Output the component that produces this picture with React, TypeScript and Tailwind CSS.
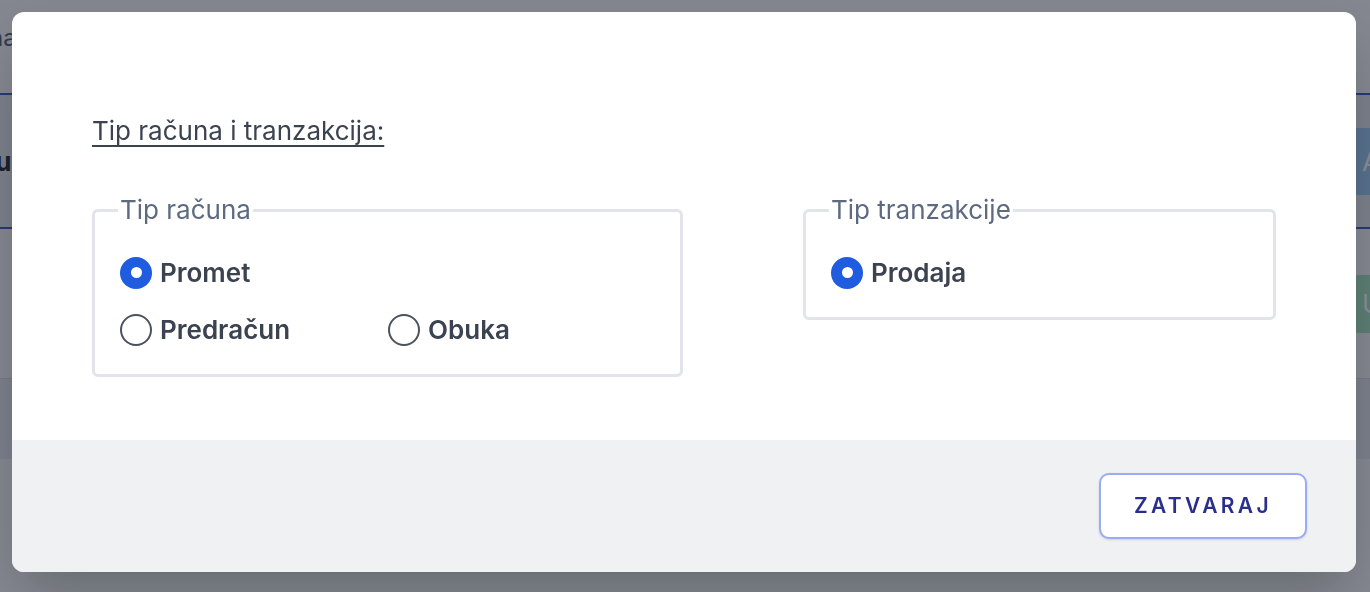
import React, { useState } from 'react';

type Option = { id: string; label: string };

const Radio: React.FC<{ checked: boolean; label: string; onSelect: () => void; className?: string }> = ({
  checked,
  label,
  onSelect,
  className = '',
}) => (
  <button type="button" onClick={onSelect} className={`flex items-center gap-2 text-left ${className}`}>
    {checked ? (
      <span className="flex h-8 w-8 shrink-0 items-center justify-center rounded-full bg-[#1f5ce0]">
        <span className="h-[11px] w-[11px] rounded-full bg-white" />
      </span>
    ) : (
      <span className="h-8 w-8 shrink-0 rounded-full border-2 border-[#4b5260] bg-white" />
    )}
    <span className="text-[26px] leading-[39px] font-semibold text-[#3b4350]">{label}</span>
  </button>
);

const tipoviRacuna: Option[] = [
  { id: 'promet', label: 'Promet' },
  { id: 'predracun', label: 'Predračun' },
  { id: 'obuka', label: 'Obuka' },
];

export default function App() {
  const [tipRacuna, setTipRacuna] = useState('promet');
  const [tipTranzakcije, setTipTranzakcije] = useState('prodaja');

  return (
    <div className="relative h-screen w-full overflow-hidden bg-white font-['Inter',sans-serif]">
      {/* page behind the dialog */}
      <div className="flex flex-col">
        <div className="flex h-[95px] items-start border-b-2 border-[#3b5bb8] bg-[#f6f7f9] pt-5">
          <span className="-ml-[80px] text-[24px] text-[#555c6b]">Blagajna</span>
        </div>
        <div className="flex h-[134px] items-center justify-between border-b-2 border-[#3b5bb8] bg-[#e4e7ee]">
          <span className="-ml-[52px] text-[26px] font-bold text-[#222733]">Raku</span>
          <span className="mr-[-40px] flex h-[67px] w-[60px] items-center pl-3 text-[26px] text-white bg-[#9cc8f0]">A</span>
        </div>
        <div className="flex h-[150px] items-center justify-end border-b border-[#d5d8df] bg-[#f6f7f9]">
          <span className="mr-[-40px] flex h-[58px] w-[60px] items-center pl-3 text-[26px] text-white bg-[#a6e3bf]">U</span>
        </div>
        <div className="h-[80px] bg-[#e4e7ee]" />
        <div className="h-[200px] bg-[#f6f7f9]" />
      </div>

      {/* overlay */}
      <div className="fixed inset-0 bg-[#111827]/50" />

      {/* dialog */}
      <div className="fixed left-3 top-3 flex h-[560px] w-[1344px] flex-col overflow-hidden rounded-xl bg-white shadow-2xl">
        <div className="flex-1 px-20 pt-[101px]">
          <h2 className="text-[26px] leading-[36px] text-[#3b4350] underline decoration-[1.5px] underline-offset-[5px]">
            Tip računa i tranzakcija:
          </h2>

          <div className="mt-[46px] flex justify-between">
            <fieldset className="h-[182px] w-[591px] rounded-md border-[3px] border-[#e3e4e9] px-[23px]">
              <legend className="px-[2px] text-[26px] leading-[30px] font-normal text-[#5d6a80]">Tip računa</legend>
              <div className="mt-[28px] flex flex-col gap-[18px] pl-[2px]">
                <Radio
                  checked={tipRacuna === tipoviRacuna[0].id}
                  label={tipoviRacuna[0].label}
                  onSelect={() => setTipRacuna(tipoviRacuna[0].id)}
                />
                <div className="flex">
                  <Radio
                    className="w-[268px]"
                    checked={tipRacuna === tipoviRacuna[1].id}
                    label={tipoviRacuna[1].label}
                    onSelect={() => setTipRacuna(tipoviRacuna[1].id)}
                  />
                  <Radio
                    checked={tipRacuna === tipoviRacuna[2].id}
                    label={tipoviRacuna[2].label}
                    onSelect={() => setTipRacuna(tipoviRacuna[2].id)}
                  />
                </div>
              </div>
            </fieldset>

            <fieldset className="h-[125px] w-[473px] rounded-md border-[3px] border-[#e3e4e9] px-[23px]">
              <legend className="px-[2px] text-[26px] leading-[30px] font-normal text-[#5d6a80]">Tip tranzakcije</legend>
              <div className="mt-[28px] pl-[2px]">
                <Radio
                  checked={tipTranzakcije === 'prodaja'}
                  label="Prodaja"
                  onSelect={() => setTipTranzakcije('prodaja')}
                />
              </div>
            </fieldset>
          </div>
        </div>

        <div className="flex h-[132px] items-center justify-end bg-[#f0f1f3] pr-[49px]">
          <button
            type="button"
            className="h-[66px] w-[208px] rounded-[10px] border-2 border-[#9aacf5] bg-white text-[21px] font-semibold tracking-[0.16em] text-[#2b2f8c] shadow-sm"
          >
            ZATVARAJ
          </button>
        </div>
      </div>
    </div>
  );
}
